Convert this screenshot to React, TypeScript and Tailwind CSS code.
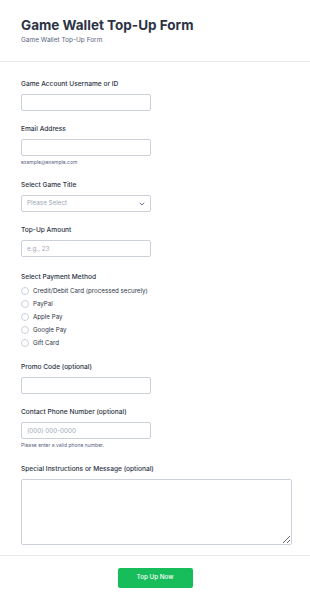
import React from "react";

const Label = ({ children }: { children: React.ReactNode }) => (
  <div className="text-[6.6px] font-medium text-[#2c3345] leading-[9px]">{children}</div>
);

const Input = ({ placeholder }: { placeholder?: string }) => (
  <input
    placeholder={placeholder}
    className="mt-[5px] block h-[17px] w-[130px] rounded-[2px] border border-[#cbd0db] bg-white px-[5px] text-[6.3px] text-[#2c3345] placeholder:text-[#a0a6b8] outline-none"
    style={{ fontFamily: "Inter, sans-serif" }}
  />
);

export default function App() {
  const methods = ["Credit/Debit Card (processed securely)", "PayPal", "Apple Pay", "Google Pay", "Gift Card"];
  return (
    <div className="w-[310px] min-h-[604px] bg-white" style={{ fontFamily: "Inter, 'Liberation Sans', sans-serif" }}>
      <div className="px-[21px] pt-[16px] pb-[16px]">
        <div className="text-[13.5px] font-bold leading-[18px] text-[#2c3345]">Game Wallet Top-Up Form</div>
        <div className="mt-[2px] text-[6.5px] leading-[9px] text-[#57647e]">Game Wallet Top-Up Form</div>
      </div>
      <div className="h-px bg-[#e6e8ee]" />
      <div className="px-[21px] pt-[18px]">
        <div>
          <Label>Game Account Username or ID</Label>
          <Input />
        </div>
        <div className="mt-[14px]">
          <Label>Email Address</Label>
          <Input />
          <div className="mt-[3px] text-[5px] leading-[7px] text-[#57647e]">example@example.com</div>
        </div>
        <div className="mt-[15px]">
          <Label>Select Game Title</Label>
          <div className="mt-[5px] flex h-[17px] w-[130px] items-center justify-between rounded-[2px] border border-[#cbd0db] bg-white px-[5px]">
            <span className="text-[6.3px] text-[#a0a6b8]">Please Select</span>
            <svg width="6" height="4" viewBox="0 0 6 4" fill="none">
              <path d="M1 1l2 2 2-2" stroke="#57647e" strokeWidth="0.9" strokeLinecap="round" strokeLinejoin="round" />
            </svg>
          </div>
        </div>
        <div className="mt-[14px]">
          <Label>Top-Up Amount</Label>
          <Input placeholder="e.g., 23" />
        </div>
        <div className="mt-[16px]">
          <Label>Select Payment Method</Label>
          <div className="mt-[2px] flex flex-col">
            {methods.map((m) => (
              <div key={m} className="flex h-[13px] items-center gap-[4px]">
                <span className="h-[8px] w-[8px] rounded-full border border-[#cbd0db] bg-white" />
                <span className="text-[6.2px] text-[#2c3345]">{m}</span>
              </div>
            ))}
          </div>
        </div>
        <div className="mt-[14px]">
          <Label>Promo Code (optional)</Label>
          <Input />
        </div>
        <div className="mt-[14px]">
          <Label>Contact Phone Number (optional)</Label>
          <Input placeholder="(000) 000-0000" />
          <div className="mt-[3px] text-[5px] leading-[7px] text-[#57647e]">Please enter a valid phone number.</div>
        </div>
        <div className="mt-[16px]">
          <Label>Special Instructions or Message (optional)</Label>
          <textarea className="mt-[5px] block h-[66px] w-[271px] rounded-[2px] border border-[#cbd0db] bg-white outline-none" />
        </div>
      </div>
      <div className="mt-[10px] h-px bg-[#e6e8ee]" />
      <div className="flex justify-center pt-[12px]">
        <button className="h-[20px] w-[75px] rounded-[2px] bg-[#18bd5b] text-[6.3px] font-medium text-white">Top Up Now</button>
      </div>
    </div>
  );
}
